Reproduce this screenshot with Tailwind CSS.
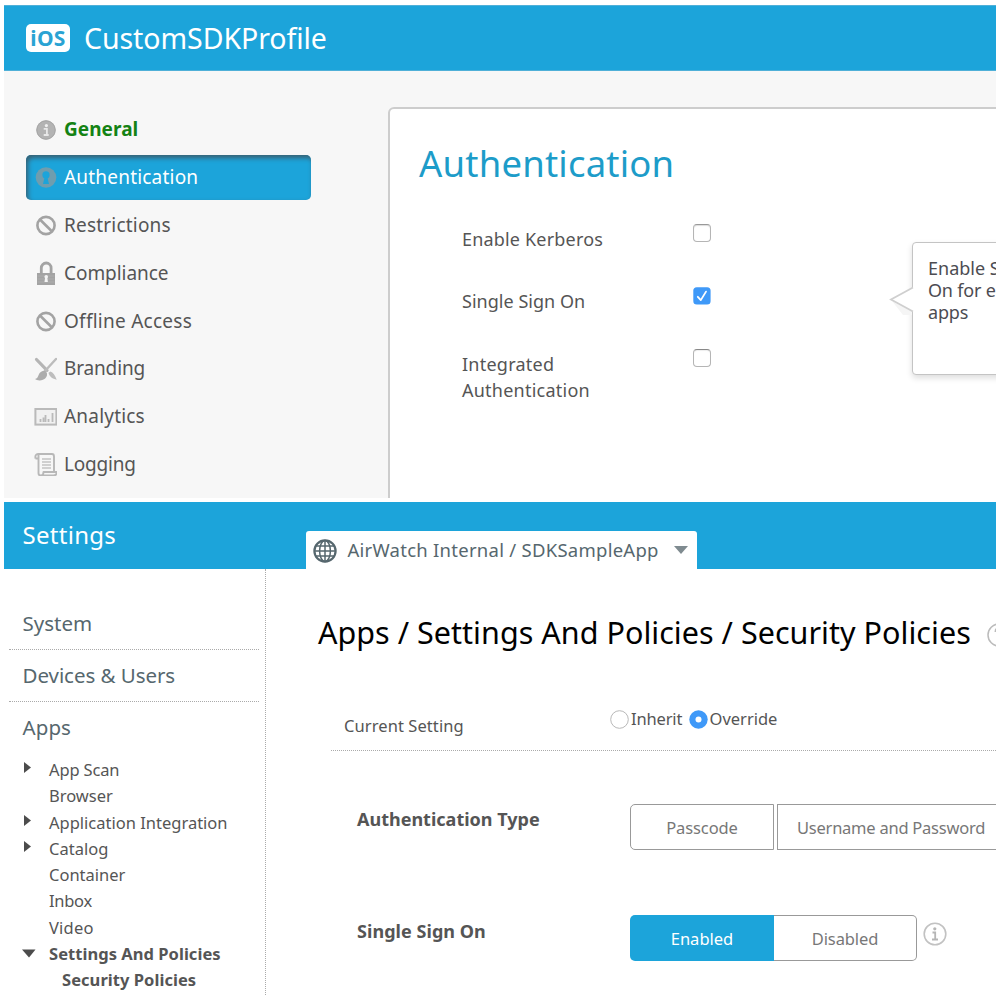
<!DOCTYPE html>
<html lang="en">
<head>
<meta charset="utf-8">
<title>SDK Profile Settings</title>
<script src="https://cdn.jsdelivr.net/npm/@tailwindcss/browser@4"></script>
</head>
<body class="bg-white w-[1000px] h-[1000px] overflow-hidden px-1 pt-[5px] font-['Noto_Sans',sans-serif] text-[#555] whitespace-nowrap">

<!-- SDK profile -->
<section class="h-[493px] w-[992px] overflow-hidden bg-[#f7f7f7]">
  <header class="h-[66px] bg-[#1ca4da] flex items-center pl-[22px] gap-[14px] border-t border-b border-[#4fb0d8]">
    <span class="w-11 h-7 rounded-[5px] bg-white text-[#2aa3d3] flex items-center justify-center font-bold text-[21px] leading-none tracking-[0.3px]">iOS</span>
    <h1 class="text-white text-[28.5px] leading-none tracking-[-0.06px]">CustomSDKProfile</h1>
  </header>
  <div class="flex">
    <nav class="w-[384px] shrink-0 pt-9 pl-[22px] flex flex-col gap-[3.85px] text-[19px]">
      <a class="w-[285px] h-11 flex items-center pl-2 gap-[7px] text-[#148214] font-bold">
        <svg class="w-[23px] h-6 shrink-0" viewBox="0 0 23 24"><circle cx="12" cy="13" r="9.7" fill="#b3b3b3"/><circle cx="12" cy="13" r="9.2" fill="none" stroke="#a6a6a6"/><circle cx="12.4" cy="8.6" r="1.6" fill="#f0f0f0"/><path d="M9.7 11.8h3.2v5.8M9.7 18h5" fill="none" stroke="#e8e8e8" stroke-width="1.8"/></svg>
        <span class="tracking-[0.05px]">General</span></a>
      <a class="w-[285px] h-[45px] -mb-[0.6px] flex items-center pl-2 gap-[7px] text-white rounded-[5px] bg-[#1ca4da] shadow-[inset_2px_3px_5px_#3a5f70]">
        <svg class="w-[23px] h-6 shrink-0" viewBox="0 0 23 24"><circle cx="12" cy="12.500" r="10.300" fill="#6f9dae"/><circle cx="12" cy="9.900" r="3.600" fill="#1ca4da"/><path d="M10.800 11.500h2.400l1.800 7.400H9z" fill="#1ca4da"/></svg>
        <span class="tracking-[0.2px]">Authentication</span></a>
      <a class="w-[285px] h-11 flex items-center pl-2 gap-[7px]">
        <svg class="w-[23px] h-6 shrink-0" viewBox="0 0 23 24"><circle cx="12" cy="12.500" r="8.600" fill="none" stroke="#a3a3a3" stroke-width="2.600"/><path d="M6.200 6.800l11.600 11.400" stroke="#a3a3a3" stroke-width="2.600"/></svg>
        <span class="tracking-[0.2px]">Restrictions</span></a>
      <a class="w-[285px] h-11 flex items-center pl-2 gap-[7px]">
        <svg class="w-[23px] h-6 shrink-0" viewBox="0 0 23 24"><path d="M7.300 13V7a4.900 5 0 0 1 9.800 0v6" fill="none" stroke="#a3a3a3" stroke-width="2.800"/><path d="M3 12h18v12H3z" fill="#a3a3a3"/><path d="M3.500 15h17M3.500 18h17M3.500 21h17" stroke="#adadad"/><circle cx="12.200" cy="15.800" r="1.800" fill="#f4f4f4"/><path d="M11.200 16h2l.7 5h-3.400z" fill="#f4f4f4"/></svg>
        <span class="tracking-[-0.06px]">Compliance</span></a>
      <a class="w-[285px] h-11 flex items-center pl-2 gap-[7px]">
        <svg class="w-[23px] h-6 shrink-0" viewBox="0 0 23 24"><circle cx="12" cy="12.500" r="8.600" fill="none" stroke="#a3a3a3" stroke-width="2.600"/><path d="M6.200 6.800l11.600 11.400" stroke="#a3a3a3" stroke-width="2.600"/></svg>
        <span class="tracking-[0.26px]">Offline Access</span></a>
      <a class="w-[285px] h-11 flex items-center pl-2 gap-[7px]">
        <svg class="w-[23px] h-6 shrink-0" viewBox="0 0 23 24"><path d="M2.500 2.500L13 13.400" stroke="#b5b5b5" stroke-width="3.200" stroke-linecap="round"/><path d="M22 2L11 14" stroke="#bcbcbc" stroke-width="2.400" stroke-linecap="round"/><path d="M7.600 14.500c3-1.800 6 .4 5.400 3.700-.5 3-3.800 5-7 5.200-2 .1-4-.4-5-1.400 2.200-.6 2.800-1.700 3.500-3.700.5-1.600 1.500-3 3.100-3.800z" fill="#adadad"/><path d="M14.500 15.800l2-1.300c2.500 1 4.700 3.800 6.200 8.200-4-.6-7.200-3-8.200-6.900z" fill="#bdbdbd"/></svg>
        <span class="tracking-[-0.15px]">Branding</span></a>
      <a class="w-[285px] h-11 flex items-center pl-2 gap-[7px]">
        <svg class="w-[23px] h-6 shrink-0" viewBox="0 0 23 24"><rect x="1.400" y="5" width="21" height="15.600" fill="#f1f1f1" stroke="#bababa" stroke-width="2"/><path d="M6.500 18v-3M9.500 18v-4.500M11.500 18v-7M14.500 18v-3M18.500 18V9" stroke="#bababa" stroke-width="1.800"/></svg>
        <span class="tracking-[0.2px]">Analytics</span></a>
      <a class="w-[285px] h-11 flex items-center pl-2 gap-[7px]">
        <svg class="w-[23px] h-6 shrink-0" viewBox="0 0 23 24"><g fill="none" stroke="#b8b8b8" stroke-width="1.900" stroke-linejoin="round"><path d="M1.500 6.500C1 3.500 2 2 4 2h14c1.500 0 2 1 2 2.500V20M4.500 2.300v19c0 1.400 1 2.200 2.500 2.200h12.500c2 0 3.300-1.300 3.300-3.500H9.500c0 2-.8 3.500-2.500 3.500M1.500 6.500h3"/></g><path d="M8 7h9M8 10h9M8 13h9M8 16h9" stroke="#c4c4c4" stroke-width="1.500"/></svg>
        <span class="tracking-[-0.2px]">Logging</span></a>
    </nav>
    <main class="relative mt-9 w-[640px] h-[500px] shrink-0 bg-white border-2 border-[#cdcdcd] rounded-tl-[6px] text-[18px]">
      <h2 class="pt-[31px] pl-[29px] text-[36.5px] leading-[46px] text-[#1d9cc9] tracking-[0.2px]">Authentication</h2>
      <div class="pl-[72px] pt-10 leading-[26px] flex flex-col gap-[36.4px]">
        <div class="flex items-start"><span class="w-[231px] tracking-[0.18px]">Enable Kerberos</span><span class="w-[18px] h-[18px] -mt-0.5 rounded-[4px] border border-[#b5b5b5] border-t-[#999] bg-white shadow-[inset_0_1px_1px_#ddd]"></span></div>
        <div class="flex items-start"><span class="w-[231px] tracking-[0.03px]">Single Sign On</span><svg class="w-[18px] h-[18px] -mt-[1.5px]" viewBox="0 0 18 18"><rect x=".3" y=".3" width="17.300" height="17.300" rx="3.500" fill="#3f99f8"/><path d="M4.800 9.800l3 3.300L13 4.600" fill="none" stroke="#fff" stroke-width="1.800" stroke-linecap="round" stroke-linejoin="round"/></svg></div>
        <div class="flex items-start"><span class="w-[231px] tracking-[0.24px]">Integrated<br>Authentication</span><span class="w-[18px] h-[18px] -mt-0.5 rounded-[4px] border border-[#b5b5b5] border-t-[#888] bg-white shadow-[inset_0_1px_1px_#eee]"></span></div>
      </div>
      <!-- help bubble -->
      <div class="absolute left-[522px] top-[133px] w-[140px] h-[133px] bg-white border border-[#c4c4c4] rounded-[4px] shadow-[0_3px_6px_#ddd] pl-[15px] pt-[14px] leading-[22px] text-[#4c4c52]">
        <svg class="absolute -left-6 top-10 w-[25px] h-[34px]" viewBox="0 0 25 34"><path d="M3 18L23 29V32H14z" fill="#f5f5f5"/><path d="M25 4L2 16.500L25 29z" fill="#fff"/><path d="M24 4.500L2 16.500L24 28.500" fill="none" stroke="#cfcfcf" stroke-width="1.800"/></svg>
        Enable S<br><span class="tracking-[-0.2px]">On for e</span><br><span class="tracking-[-0.2px]">apps</span>
      </div>
    </main>
  </div>
</section>

<!-- Settings console -->
<section class="mt-1 w-[992px] h-[493px] overflow-hidden bg-white">
  <header class="h-[67px] bg-[#1ca4da] flex items-end">
    <h1 class="w-[302px] pl-[18.5px] h-[67px] leading-[66px] text-[24px] text-white tracking-[0.28px]">Settings</h1>
    <div class="w-[391px] h-[38px] bg-white rounded-t-[3px] flex items-center pl-[7px] text-[18.5px] text-[#56676e]">
      <svg class="w-6 h-6 mt-0.5 shrink-0" viewBox="0 0 24 24" fill="none" stroke="#56676e"><circle cx="12" cy="12" r="10.600" stroke-width="2.200"/><ellipse cx="12" cy="12" rx="5.400" ry="10.500" stroke-width="1.500"/><path d="M12 1.500v21M1.500 12h21M3 7h18M3 17h18" stroke-width="1.500"/></svg>
      <span class="ml-[10.5px] w-[326.5px] tracking-[0.26px]">AirWatch Internal / SDKSampleApp</span>
      <svg class="w-[14px] h-2 shrink-0" viewBox="0 0 14 8"><path d="M0 0h14L7 8z" fill="#7f8b90"/></svg>
    </div>
  </header>
  <div class="flex">
    <nav class="w-[262px] h-[426px] shrink-0 border-r border-dotted border-[#aaa] pl-[5px] text-[#555]">
      <div class="text-[20.5px] text-[#56676e] w-[250px]">
        <div class="h-[81px] pt-7 pl-[13.5px] leading-[52px] border-b border-dotted border-[#aaa]">System</div>
        <div class="h-[52px] pl-[13.5px] leading-[51px] border-b border-dotted border-[#aaa] tracking-[-0.05px]">Devices &amp; Users</div>
        <div class="h-[55px] pl-[13.5px] leading-[51px] tracking-[0.1px]">Apps</div>
      </div>
      <ul class="text-[16.5px] leading-[26.25px]">
        <li class="flex pl-[15px]"><svg class="w-[25px] h-5 shrink-0" viewBox="0 0 25 20"><path d="M0 5l7 5.500L0 16z" fill="#4c4c4c"/></svg><span class="tracking-[-0.15px]">App Scan</span></li>
        <li class="pl-10">Browser</li>
        <li class="flex pl-[15px]"><svg class="w-[25px] h-5 shrink-0" viewBox="0 0 25 20"><path d="M0 5l7 5.500L0 16z" fill="#4c4c4c"/></svg><span>Application Integration</span></li>
        <li class="flex pl-[15px]"><svg class="w-[25px] h-5 shrink-0" viewBox="0 0 25 20"><path d="M0 5l7 5.500L0 16z" fill="#4c4c4c"/></svg><span>Catalog</span></li>
        <li class="pl-10">Container</li>
        <li class="pl-10 tracking-[-0.3px]">Inbox</li>
        <li class="pl-10 tracking-[0.2px]">Video</li>
        <li class="flex pl-[13px] font-bold"><svg class="w-[27px] h-5 shrink-0" viewBox="0 0 27 20"><path d="M0 8.500h13.500L7 16.500z" fill="#4c4c4c"/></svg><span class="tracking-[0.04px]">Settings And Policies</span></li>
        <li class="pl-[53px] font-bold tracking-[0.05px]">Security Policies</li>
      </ul>
    </nav>
    <main class="w-[730px] shrink-0 overflow-hidden">
      <div class="pl-[52px] pt-[41px] flex items-center text-black text-[30.5px] leading-[44px]">
        <h2 class="w-[669px] shrink-0 tracking-[0.03px]">Apps / Settings And Policies / Security Policies</h2>
        <svg class="w-6 h-6 mt-1.5 shrink-0" viewBox="0 0 24 24" fill="none" stroke="#bbb"><circle cx="12" cy="12" r="11" stroke-width="1.500"/><path d="M8.500 9c0-5 7-5 7-.5 0 3-3.500 3-3.500 6M12 17v2" stroke-width="2"/></svg>
      </div>
      <div class="ml-[65px] h-[97px] pl-[13px] pt-[54px] border-b border-dotted border-[#aaa] flex items-start text-[16.5px] leading-[22px]">
        <span class="w-[266px] pt-[7px] tracking-[0.08px]">Current Setting</span>
        <svg class="w-[19px] h-[19px] mt-0.5" viewBox="0 0 19 19"><circle cx="9.500" cy="9.500" r="8.800" fill="#fff" stroke="#b8b8b8"/></svg>
        <span class="ml-0.5 w-[57.5px] tracking-[-0.15px]">Inherit</span>
        <svg class="w-[19px] h-[19px] mt-0.5" viewBox="0 0 19 19"><circle cx="9.500" cy="9.500" r="9.200" fill="#3f99f8"/><circle cx="9.500" cy="9.500" r="3" fill="#fff"/></svg>
        <span class="ml-0.5">Override</span>
      </div>
      <div class="pt-[53px] pl-[91px] flex items-start text-[16.5px]">
        <div class="w-[273px] shrink-0 pt-0.5 font-bold text-[18px] leading-[26px]">Authentication Type</div>
        <div class="flex shrink-0 gap-[3px] text-[#777]">
          <button class="w-36 h-[46px] border border-[#999] rounded-l-[5px] pt-[3px] tracking-[-0.1px]">Passcode</button>
          <button class="w-[230px] h-[46px] border border-[#999] pl-[19px] pt-[3px] text-left tracking-[-0.24px]">Username and Password</button>
        </div>
      </div>
      <div class="pt-[65px] pl-[91px] flex items-start text-[16.5px]">
        <div class="w-[273px] shrink-0 pt-[3px] font-bold text-[18px] leading-[26px] tracking-[0.05px]">Single Sign On</div>
        <button class="w-36 h-[46px] pt-[3px] rounded-l-[5px] bg-[#1ca4da] text-white">Enabled</button>
        <button class="w-[143px] h-[46px] pt-[3px] border border-l-0 border-[#999] rounded-r-[5px] text-[#777] tracking-[-0.1px]">Disabled</button>
        <svg class="w-6 h-6 ml-1.5 mt-[7px]" viewBox="0 0 24 24"><circle cx="12" cy="12" r="10.800" fill="none" stroke="#c2c2c2" stroke-width="1.600"/><circle cx="11.800" cy="6.800" r="1.600" fill="#b5b5b5"/><path d="M9.500 10.500h2.700V17M9 17.500h6" fill="none" stroke="#b5b5b5" stroke-width="1.800"/></svg>
      </div>
    </main>
  </div>
</section>
</body>
</html>
